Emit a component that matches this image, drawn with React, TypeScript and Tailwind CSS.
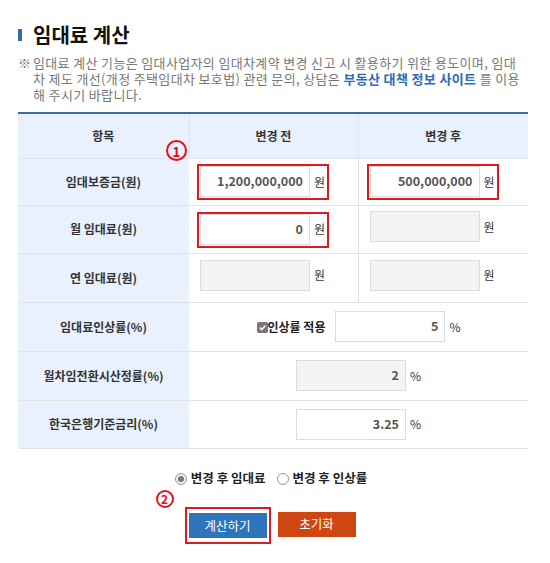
import React from "react";

const font = { fontFamily: '"Noto Sans CJK KR", "Noto Sans", sans-serif' };

function Field({
  value,
  gray,
  unit,
  width = "w-[110px]",
  highlight,
}: {
  value?: string;
  gray?: boolean;
  unit: string;
  width?: string;
  highlight?: boolean;
}) {
  return (
    <div className="relative inline-flex items-center">
      <div
        className={`${width} h-[31px] border border-[#dcdcdc] flex items-center justify-end pr-[6px] text-[12.5px] font-bold text-[#555] ${
          gray ? "bg-[#f4f4f4]" : "bg-white"
        }`}
      >
        {value}
      </div>
      <span className="ml-[4px] text-[12px] text-[#333]">{unit}</span>
      {highlight && (
        <div className="absolute left-[-3px] right-[-4px] top-[-2px] bottom-[-3px] border-2 border-[#dc1a22] pointer-events-none" />
      )}
    </div>
  );
}

function Circled({ n, size }: { n: string; size: string }) {
  return (
    <span
      className={`${size} rounded-full border-[2.5px] border-[#e3131b] text-[#e3131b] font-bold flex items-center justify-center leading-none`}
    >
      {n}
    </span>
  );
}

export default function App() {
  const labelCell =
    "bg-[#e8f1fd] text-[12px] font-bold text-[#333] text-center border-b border-[#e2e2e2]";
  const cell = "border-b border-[#e2e2e2] pl-[11px]";
  return (
    <div className="w-[550px] h-[563px] bg-white" style={font}>
      <div className="pl-[18px] pt-[22px]">
        <div className="flex items-center h-[26px]">
          <span className="w-[4px] h-[12px] bg-[#2f6fb0] mr-[11px]" />
          <h1 className="text-[20px] font-bold text-[#111] leading-none">임대료 계산</h1>
        </div>
        <div className="flex mt-[7px] text-[13px] tracking-[0.35px] leading-[16px] text-[#777]">
          <span className="w-[15px] shrink-0 tracking-normal">※</span>
          <p className="whitespace-nowrap">
            임대료 계산 기능은 임대사업자의 임대차계약 변경 신고 시 활용하기 위한 용도이며, 임대
            <br />
            차 제도 개선(개정 주택임대차 보호법) 관련 문의, 상담은{" "}
            <span className="font-bold text-[#2c6bb5]">부동산 대책 정보 사이트</span> 를 이용
            <br />
            해 주시기 바랍니다.
          </p>
        </div>

        <div className="relative mt-[9px] w-[510px]">
          <table className="w-[510px] border-collapse table-fixed border-t-2 border-[#3b6ea5]">
            <colgroup>
              <col className="w-[171px]" />
              <col className="w-[169px]" />
              <col className="w-[170px]" />
            </colgroup>
            <thead>
              <tr className="h-[45px] bg-[#e8f1fd] text-[12px] font-bold text-[#333]">
                <th className="border-b border-r border-[#dde6f2]">항목</th>
                <th className="border-b border-r border-[#dde6f2]">변경 전</th>
                <th className="border-b border-[#dde6f2]">변경 후</th>
              </tr>
            </thead>
            <tbody>
              <tr className="h-[47px]">
                <td className={labelCell}>임대보증금(원)</td>
                <td className={`${cell} border-r`}>
                  <Field value="1,200,000,000" unit="원" highlight />
                </td>
                <td className={cell}>
                  <Field value="500,000,000" unit="원" highlight />
                </td>
              </tr>
              <tr className="h-[48px]">
                <td className={labelCell}>월 임대료(원)</td>
                <td className={`${cell} border-r`}>
                  <Field value="0" unit="원" highlight />
                </td>
                <td className={cell}>
                  <Field gray unit="원" />
                </td>
              </tr>
              <tr className="h-[49px]">
                <td className={labelCell}>연 임대료(원)</td>
                <td className={`${cell} border-r`}>
                  <Field gray unit="원" />
                </td>
                <td className={cell}>
                  <Field gray unit="원" />
                </td>
              </tr>
              <tr className="h-[49px]">
                <td className={labelCell}>임대료인상률(%)</td>
                <td colSpan={2} className="border-b border-[#e2e2e2]">
                  <div className="flex items-center justify-center">
                    <span className="w-[11px] h-[11px] bg-[#777] rounded-[2px] flex items-center justify-center mt-[2px]">
                      <svg width="9" height="9" viewBox="0 0 10 10">
                        <path d="M2 5.2 L4.2 7.4 L8.2 2.8" stroke="white" strokeWidth="1.8" fill="none" />
                      </svg>
                    </span>
                    <span className="text-[12px] font-bold text-[#222] mr-[10px]">인상률 적용</span>
                    <Field value="5" unit="%" />
                  </div>
                </td>
              </tr>
              <tr className="h-[49px]">
                <td className={labelCell}>월차임전환시산정률(%)</td>
                <td colSpan={2} className="border-b border-[#e2e2e2]">
                  <div className="flex items-center justify-center">
                    <Field value="2" gray unit="%" />
                  </div>
                </td>
              </tr>
              <tr className="h-[48px]">
                <td className={labelCell}>한국은행기준금리(%)</td>
                <td colSpan={2} className="border-b border-[#e2e2e2]">
                  <div className="flex items-center justify-center">
                    <Field value="3.25" unit="%" />
                  </div>
                </td>
              </tr>
            </tbody>
          </table>
          <div className="absolute left-[148px] top-[28px]">
            <Circled n="1" size="w-[21px] h-[21px] text-[14px]" />
          </div>
        </div>

        <div className="w-[510px] flex justify-center items-center mt-[22px] h-[16px] text-[12.5px] font-bold text-[#222] pr-[4px]">
          <span className="w-[12px] h-[12px] rounded-full border border-[#999] bg-[#eee] flex items-center justify-center mr-[4px]">
            <span className="w-[6px] h-[6px] rounded-full bg-[#777]" />
          </span>
          <span>변경 후 임대료</span>
          <span className="w-[12px] h-[12px] rounded-full border border-[#999] bg-white ml-[11px] mr-[4px]" />
          <span>변경 후 인상률</span>
        </div>

        <div className="relative w-[510px] flex justify-center gap-[11px] mt-[25px] pr-[2px]">
          <div className="relative">
            <button className="w-[78px] h-[25px] bg-[#2d74ba] text-white text-[12.5px]">계산하기</button>
            <div className="absolute left-[-4px] right-[-4px] top-[-5px] bottom-[-6px] border-2 border-[#dc1a22]" />
            <div className="absolute left-[-33px] top-[-22px]">
              <Circled n="2" size="w-[18px] h-[18px] text-[12px]" />
            </div>
          </div>
          <button className="w-[78px] h-[25px] bg-[#cf4710] text-white text-[12.5px]">초기화</button>
        </div>
      </div>
    </div>
  );
}
